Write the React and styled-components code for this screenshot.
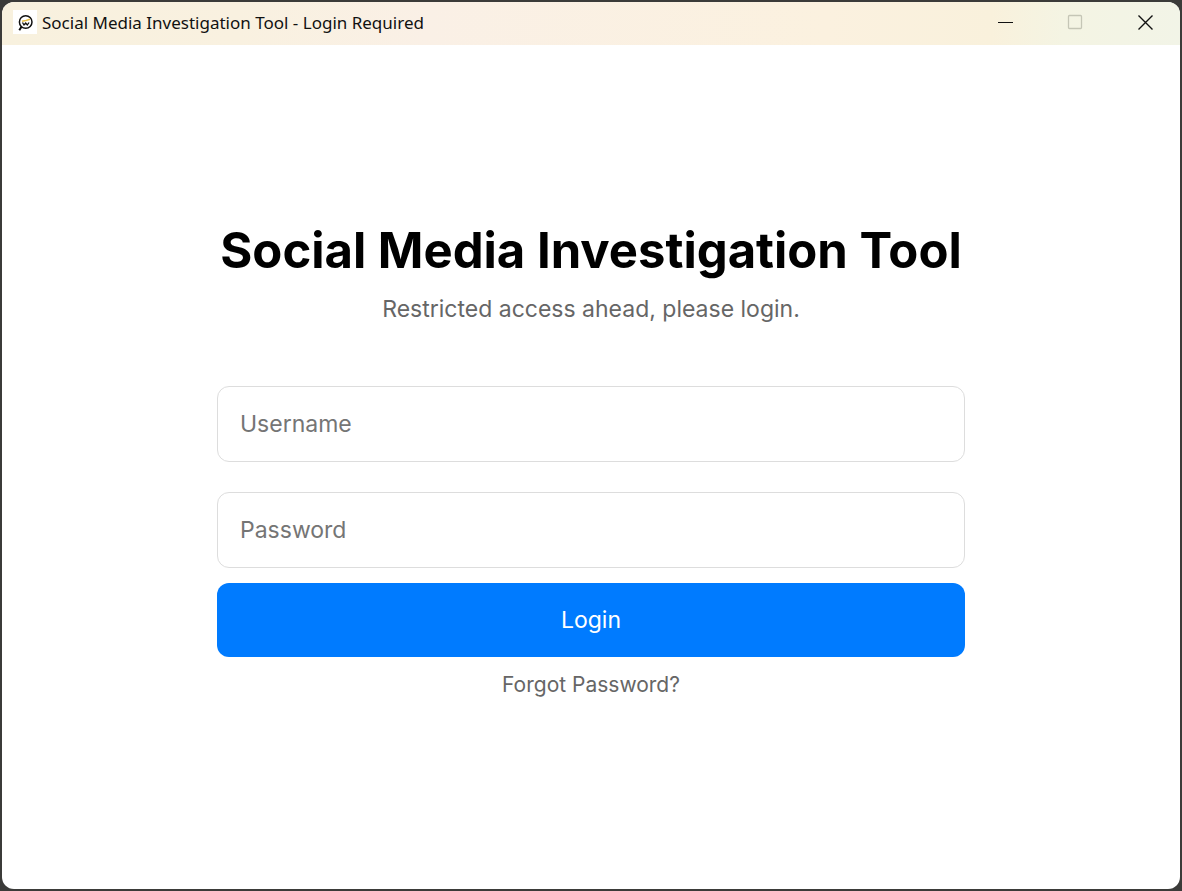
import React from "react";
import styled, { createGlobalStyle } from "styled-components";

const GlobalStyle = createGlobalStyle`
  * { box-sizing: border-box; }
  body { margin: 0; background: #3b3b39; font-family: Inter, "Liberation Sans", sans-serif; }
`;

const Desktop = styled.div`
  min-height: 100vh;
  display: flex;
  background: #3b3b39;
  padding: 2px;
`;

const Window = styled.div`
  flex: 1;
  display: flex;
  flex-direction: column;
  border-radius: 12px;
  overflow: hidden;
  background: #ffffff;
`;

const TitleBar = styled.header`
  display: flex;
  align-items: center;
  height: 43px;
  padding: 0 0 3px 11px;
  background: linear-gradient(90deg, #f8f1de 0%, #f9f1e0 20%, #faf0e6 36%, #fbf1df 70%, #f9f1dc 84%, #f4f4e3 90%, #f2f4e7 100%);
`;

const AppIcon = styled.span`
  display: flex;
  width: 24px;
  height: 24px;
  background: #ffffff;
`;

const WindowTitle = styled.span`
  flex: 1;
  margin-left: 5px;
  font: 17px "Noto Sans", "Open Sans", sans-serif;
  color: #111111;
`;

const WindowButton = styled.button`
  display: flex;
  align-items: center;
  justify-content: center;
  width: 70px;
  height: 40px;
  padding: 0;
  border: 0;
  background: none;
  color: #111111;
  &:disabled { color: #c5c6b6; }
`;

const Main = styled.main`
  flex: 1;
  display: flex;
  flex-direction: column;
  align-items: center;
  justify-content: center;
  padding: 24px 24px 40px;
`;

const LoginForm = styled.form`
  display: flex;
  flex-direction: column;
  align-items: stretch;
  width: 100%;
  max-width: 748px;
`;

const Heading = styled.h1`
  margin: 0;
  font-size: 49px;
  line-height: 60px;
  font-weight: 700;
  text-align: center;
  white-space: nowrap;
  color: #000000;
  @media (max-width: 800px) {
    white-space: normal;
  }
`;

const Subtitle = styled.p`
  margin: 12px 0 61px;
  font-size: 23px;
  line-height: 32px;
  text-align: center;
  color: #666666;
`;

const Field = styled.input`
  width: 100%;
  height: 76px;
  margin-bottom: ${({ $gap }) => $gap}px;
  padding: 0 22px;
  border: 1px solid #dddddd;
  border-radius: 12px;
  background: #ffffff;
  font: inherit;
  font-size: 23px;
  color: #000000;
  &::placeholder { color: #757575; opacity: 1; }
`;

const LoginButton = styled.button`
  height: 74px;
  border: 0;
  border-radius: 12px;
  background: #007bff;
  color: #ffffff;
  font: inherit;
  font-size: 23px;
`;

const ForgotLink = styled.a`
  align-self: center;
  margin-top: 16px;
  font-size: 21px;
  line-height: 24px;
  color: #666666;
  text-decoration: none;
`;

export default function App() {
  return (
    <Desktop>
      <GlobalStyle />
      <Window>
        <TitleBar>
          <AppIcon>
            <svg width="24" height="24" viewBox="0 0 24 24" fill="none" stroke="#111" aria-hidden="true">
              <circle cx="12.700" cy="12" r="6.300" strokeWidth="1.500" />
              <path d="M8.500 16.800 6.300 20.300" strokeWidth="2" />
              <path d="M9 11.200l4-.7 4-1.200" stroke="#e9c04a" strokeWidth="1.500" />
              <path d="M9.500 12.500l1.500 2.500 1.700-2 1.600 2 1.700-2.500" strokeWidth="1.300" />
            </svg>
          </AppIcon>
          <WindowTitle>Social Media Investigation Tool - Login Required</WindowTitle>
          <WindowButton type="button" aria-label="Minimize">
            <svg width="16" height="16" stroke="currentColor"><path d="M1 8.500h15" /></svg>
          </WindowButton>
          <WindowButton type="button" aria-label="Maximize" disabled>
            <svg width="16" height="16" fill="none" stroke="currentColor"><rect x="1.500" y="1.500" width="13" height="13" rx="1" strokeWidth="1.300" /></svg>
          </WindowButton>
          <WindowButton type="button" aria-label="Close">
            <svg width="16" height="16" fill="none" stroke="currentColor" strokeWidth="1.400"><path d="M1.500 1.500l14 14M15.500 1.500l-14 14" /></svg>
          </WindowButton>
        </TitleBar>
        <Main>
          <LoginForm onSubmit={(event) => event.preventDefault()}>
            <Heading>Social Media Investigation Tool</Heading>
            <Subtitle>Restricted access ahead, please login.</Subtitle>
            <Field type="text" aria-label="Username" placeholder="Username" $gap={30} />
            <Field type="password" aria-label="Password" placeholder="Password" $gap={15} />
            <LoginButton type="submit">Login</LoginButton>
            <ForgotLink href="#forgot">Forgot Password?</ForgotLink>
          </LoginForm>
        </Main>
      </Window>
    </Desktop>
  );
}
